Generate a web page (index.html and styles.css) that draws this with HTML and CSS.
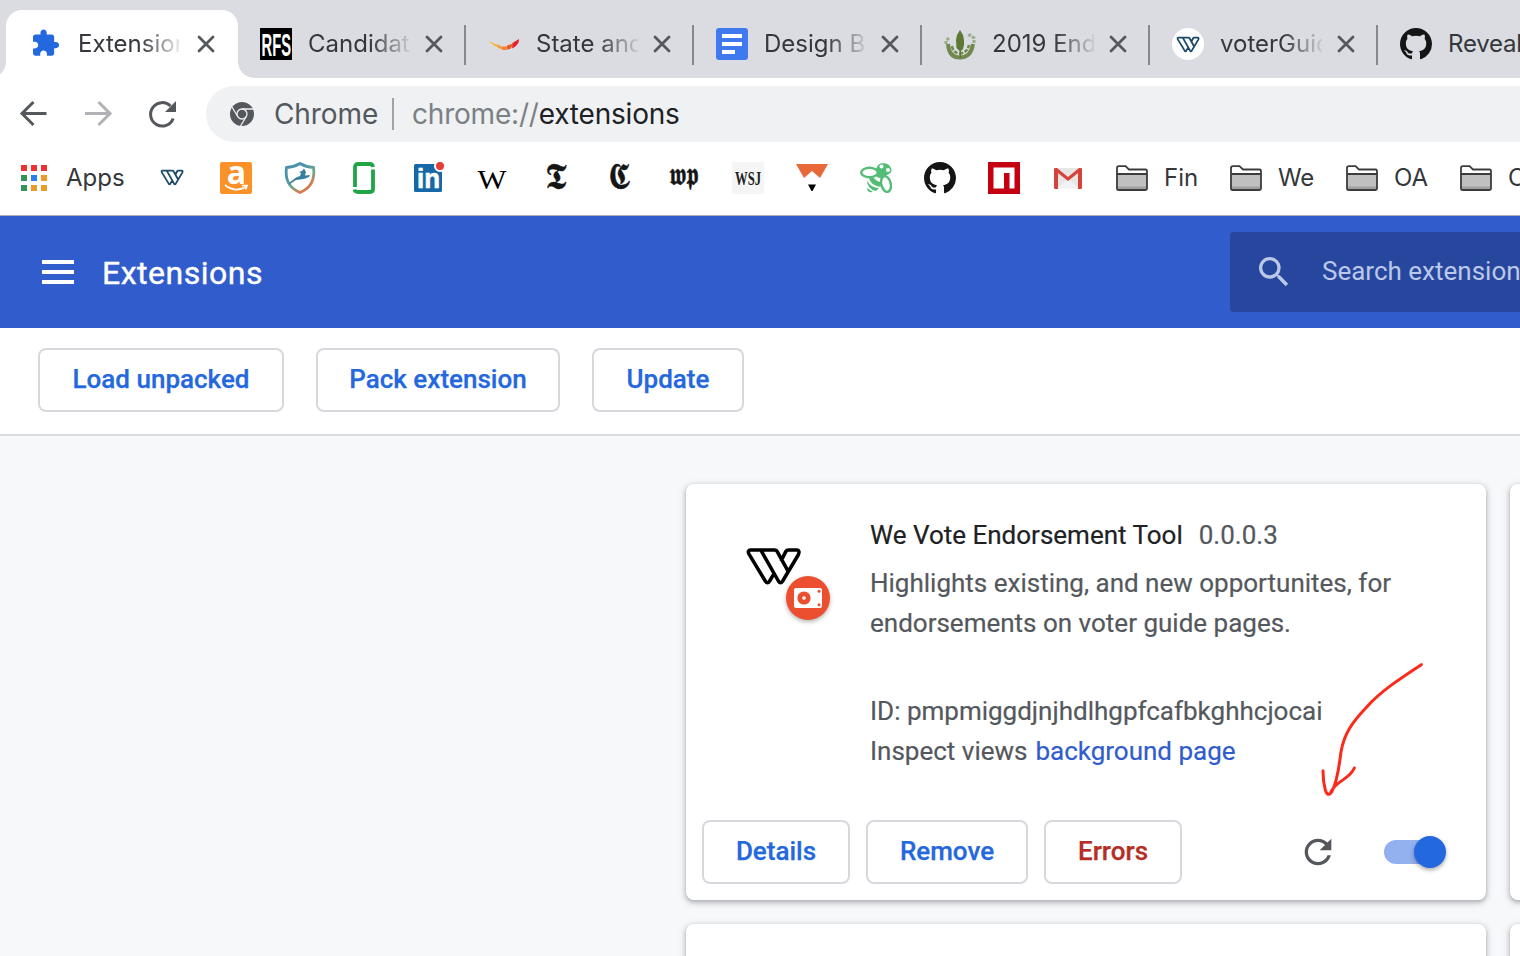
FILE: index.html
```html
<!DOCTYPE html>
<html lang="en">
<head>
<meta charset="utf-8">
<title>Extensions</title>
<link rel="stylesheet" href="styles.css">
</head>
<body>
<svg class="defs" aria-hidden="true">
  <symbol id="close" viewBox="0 0 24 24"><path d="M5 5L19 19M19 5L5 19" fill="none" stroke="#54585d" stroke-width="2.8" stroke-linecap="round"/></symbol>
  <symbol id="wevote" viewBox="196 210 170 122"><path d="M208 234L257 315Q263 324 269 315L284 290M245 225L296 315Q302 324 308 315L355 236Q361 222 350 222H326Q320 222 318 226L303 255M208 234Q202 222 213 222H284Q290 222 293 228L324 284" fill="none" stroke="currentColor" stroke-linejoin="round"/></symbol>
  <symbol id="github" viewBox="0 0 16 16"><path fill="#151515" d="M8 0C3.58 0 0 3.58 0 8c0 3.54 2.29 6.53 5.47 7.59.4.07.55-.17.55-.38 0-.19-.01-.82-.01-1.49-2.01.37-2.53-.49-2.69-.94-.09-.23-.48-.94-.82-1.13-.28-.15-.68-.52-.01-.53.63-.01 1.08.58 1.23.82.72 1.21 1.87.87 2.33.66.07-.52.28-.87.51-1.07-1.78-.2-3.64-.89-3.64-3.95 0-.87.31-1.59.82-2.15-.08-.2-.36-1.02.08-2.12 0 0 .67-.21 2.2.82.64-.18 1.32-.27 2-.27.68 0 1.36.09 2 .27 1.53-1.04 2.2-.82 2.2-.82.44 1.1.16 1.92.08 2.12.51.56.82 1.27.82 2.15 0 3.07-1.87 3.75-3.65 3.95.29.25.54.73.54 1.48 0 1.07-.01 1.93-.01 2.2 0 .21.15.46.55.38A8.013 8.013 0 0016 8c0-4.42-3.58-8-8-8z"/></symbol>
  <symbol id="folder" viewBox="0 0 32 32"><path d="M1 6.500Q1 4.200 3 4.200H9.500L13 7.500H29.500Q31 7.500 31 9V26.500Q31 28 29.500 28H2.500Q1 28 1 26.500Z" fill="#fff"/><path d="M1 12H31V28H1Z" fill="#c0c0c0"/><path d="M1 24.500H31V28H1Z" fill="#a0a0a0"/><path d="M1 12H31M1 6Q1 4.200 3 4.200H9.500L13 7.500H29.500Q31 7.500 31 9V26.500Q31 28 29.500 28H2.500Q1 28 1 26.500Z" fill="none" stroke="#3c3c3c" stroke-width="1.800"/></symbol>
</svg>

<header class="tabs">
  <div class="tab tab-active">
    <svg class="icon" viewBox="0 0 32 32"><path transform="translate(.5 .3) scale(1.245)" fill="#2468e0" d="M20.5 11H19V7c0-1.1-.9-2-2-2h-4V3.500C13 2.120 11.880 1 10.500 1S8 2.120 8 3.500V5H4c-1.100 0-1.990.9-1.990 2v3.800H3.500c1.490 0 2.700 1.210 2.700 2.700s-1.210 2.700-2.700 2.700H2V20c0 1.100.9 2 2 2h3.800v-1.500c0-1.490 1.210-2.700 2.700-2.700 1.490 0 2.700 1.210 2.700 2.700V22H17c1.100 0 2-.9 2-2v-4h1.500c1.380 0 2.500-1.120 2.500-2.500S21.880 11 20.500 11z"/></svg>
    <span class="tab-title">Extensions</span><svg class="close"><use href="#close"/></svg>
  </div>
  <div class="tab">
    <svg class="icon" viewBox="0 0 32 32"><path d="M0 0H32V32H0Z"/><text class="rfs" x="1.500" y="27.500" textLength="29.500" lengthAdjust="spacingAndGlyphs">RFS</text></svg>
    <span class="tab-title">Candidate</span><svg class="close"><use href="#close"/></svg>
  </div>
  <div class="tab">
    <svg class="icon" viewBox="0 0 32 32"><path d="M1 13L8 16.500 8 18.500Q4 17 1 13Z" fill="#fbb829"/><path d="M7 16L13 18 14 21.500Q9 20 7 16Z" fill="#f8a02c"/><path d="M13 18.500H19L18 22H14.500Z" fill="#f58232"/><path d="M19 17.500L25 15.500 23 20.500 18.500 22Z" fill="#ee5a2a"/><path d="M24.500 15L31 11Q31.500 17 24 20.500Z" fill="#e8222a"/></svg>
    <span class="tab-title">State and</span><svg class="close"><use href="#close"/></svg>
  </div>
  <div class="tab">
    <svg class="icon" viewBox="0 0 32 32"><rect width="32" height="32" rx="3" fill="#4079ed"/><path d="M6 6H26V10H6ZM6 14H26V18H6ZM6 22H19V26H6Z" fill="#fff"/></svg>
    <span class="tab-title">Design B</span><svg class="close"><use href="#close"/></svg>
  </div>
  <div class="tab">
    <svg class="icon" viewBox="0 0 32 32"><g fill="none" stroke="#71894f"><path d="M4 16Q5 29.500 16 29.500Q27 29.500 29 16" stroke-width="4"/><path d="M8 18Q9 25 16 25.500Q23 25 25 17" stroke-width="2.500" stroke-dasharray="4 1.500"/><path d="M2 16V12L6 10M30 15V10L26 7L23 9" stroke-width="3" stroke-dasharray="3 1.500" opacity=".6"/></g><path d="M16 2L19 7 20 12 20 17 19 21 17 23V30H15.500V23L12.500 20 12 12 13 7Z" fill="#5d7a35"/></svg>
    <span class="tab-title">2019 End</span><svg class="close"><use href="#close"/></svg>
  </div>
  <div class="tab">
    <span class="icon disc"><svg class="we-small"><use href="#wevote"/></svg></span>
    <span class="tab-title">voterGuid</span><svg class="close"><use href="#close"/></svg>
  </div>
  <div class="tab tab-last">
    <svg class="icon"><use href="#github"/></svg>
    <span class="tab-title">Reveal</span>
  </div>
</header>

<nav class="toolbar">
  <svg class="nav" viewBox="0 0 32 32"><path d="M28.500 15.500H4.500M15.500 4L4 15.500L15.500 27" fill="none" stroke="#54585d" stroke-width="3"/></svg>
  <svg class="nav" viewBox="0 0 32 32"><path d="M3 15.500H27.500M16.500 4L28 15.500L16.500 27" fill="none" stroke="#b0b2b5" stroke-width="3"/></svg>
  <svg class="nav" viewBox="0 0 32 32"><path d="M27.200 20.500A11.700 11.700 0 1 1 24.500 8" fill="none" stroke="#54585d" stroke-width="3"/><path d="M30 3V14H19Z" fill="#54585d"/></svg>
  <div class="omnibox">
    <svg class="chrome" viewBox="0 0 24 24"><circle cx="12" cy="12" r="12" fill="#54585d"/><g fill="none" stroke="#eff1f3" stroke-width="1.300"><circle cx="12" cy="12" r="5"/><path d="M12 7H23M7.700 14.500L2 5M16.300 14.500L10.500 24"/></g></svg>
    <span class="site">Chrome</span><span class="rule"></span><span class="url">chrome://<b>extensions</b></span>
  </div>
</nav>

<nav class="bookmarks">
  <svg class="apps" viewBox="0 0 26 26"><path fill="#ef3030" d="M0 0H6V6H0ZM10 0H16V6H10ZM20 0H26V6H20Z"/><path fill="#33935a" d="M0 10H6V16H0ZM0 20H6V26H0Z"/><path fill="#2a80ee" d="M10 10H16V16H10Z"/><path fill="#eb9b27" d="M20 10H26V16H20ZM10 20H16V26H10ZM20 20H26V26H20Z"/></svg>
  <span class="apps-label">Apps</span>
  <span class="icon"><svg class="we-small"><use href="#wevote"/></svg></span>
  <svg class="icon" viewBox="0 0 32 32"><rect width="32" height="32" rx="2" fill="#fb9129"/><text class="amz" x="16.500" y="22" text-anchor="middle">a</text><path d="M5 23Q15 31 25.500 25M22 23.500H27L25.500 27.500" fill="none" stroke="#fff" stroke-width="1.700"/></svg>
  <svg class="icon" viewBox="0 0 32 32"><defs><linearGradient id="shield" x2=".7" y2="1"><stop offset=".35" stop-color="#4b91ae"/><stop offset=".65" stop-color="#69aa86"/><stop offset=".88" stop-color="#d77b4d"/></linearGradient></defs><path d="M16 1.500Q22 5 29.500 5.500Q32 24 16 30.500Q0 24 2.500 5.500Q10 5 16 1.500Z" fill="none" stroke="url(#shield)" stroke-width="2.800"/><path d="M5 21L12 15.500 16 14 17 11 15 10 18 9 20 6.500 22 10 21 13.500 26 13 25 15 20 17 12 18 6 22Z" fill="#377d9c"/></svg>
  <svg class="icon" viewBox="0 0 32 32"><path d="M7 25V5Q7 2 10 2H22Q24.500 2 25 5M25 7.500V27Q25 30 22 30H10Q7 30 6.500 27.500" fill="none" stroke="#20a446" stroke-width="3.800"/></svg>
  <svg class="icon" viewBox="0 0 32 32"><rect x="2" y="2" width="28" height="28" rx="1.500" fill="#1768a6"/><circle cx="28" cy="4" r="6" fill="#fff"/><text class="li" x="5" y="26" textLength="23" lengthAdjust="spacingAndGlyphs">in</text><circle cx="28" cy="4" r="4" fill="#e43d3c"/></svg>
  <svg class="icon" viewBox="0 0 32 32"><text class="wiki" x="16" y="26.500" text-anchor="middle" textLength="29" lengthAdjust="spacingAndGlyphs">W</text></svg>
  <svg class="icon" viewBox="0 0 32 32"><text class="fraktur" x="5" y="27" textLength="22" lengthAdjust="spacingAndGlyphs">𝕿</text></svg>
  <svg class="icon" viewBox="0 0 32 32"><text class="fraktur" x="4" y="27" textLength="23" lengthAdjust="spacingAndGlyphs">𝕮</text></svg>
  <svg class="icon" viewBox="0 0 32 32"><text class="fraktur wp" x="1" y="23" textLength="30" lengthAdjust="spacingAndGlyphs">𝖜𝖕</text></svg>
  <svg class="icon" viewBox="0 0 32 32"><path d="M0 0H32V32H0Z" fill="#f5f5f5"/><text class="wsj" x="3" y="23" textLength="26" lengthAdjust="spacingAndGlyphs">WSJ</text></svg>
  <svg class="icon" viewBox="0 0 32 32"><path d="M0 2H32L24 16 16 9 8 16Z" fill="#e8683a"/><path d="M12 22.500H20L16.500 29H15.500Z"/></svg>
  <svg class="icon" viewBox="0 0 32 32"><path d="M16 7Q18 1 23 1.300Q29 1 31 6Q33 11 27 13Q22 18 17 15Q14 12 16 7ZM9 15.500L13 15Q17 20 21 20L20.500 25Q10 23 9 15.500ZM7 18.500Q11 26 19 26L16 29Q7 27 7 18.500ZM7 26L13 30Q7 31 7 26Z" fill="#55bc78"/><g fill="#fff" stroke="#55bc78" stroke-width="2.400"><ellipse cx="9.500" cy="10.500" rx="8.300" ry="4.700"/><ellipse cx="26" cy="22" rx="4.700" ry="8" transform="rotate(-14 26 22)"/></g><circle cx="21.500" cy="4.500" r="2" fill="#fff"/><circle cx="28" cy="8" r="2" fill="#fff"/></svg>
  <svg class="icon"><use href="#github"/></svg>
  <svg class="icon" viewBox="0 0 32 32"><path d="M0 0H32V32H0Z" fill="#c40010"/><path d="M5.500 5.500H26.500V26.500H21.500V11H16V26.500H5.500Z" fill="#fff"/></svg>
  <svg class="icon" viewBox="0 0 32 32"><path d="M2 6H30V27H2Z" fill="#e6e6e6"/><path d="M4 27L16 17L28 27Z" fill="#f3f3f3"/><path d="M2 7V25.500Q2 27 3.500 27H6V11L16 19 26 11V27H28.500Q30 27 30 25.500V7Q30 6 28.500 6H27L16 15 5 6H3.500Q2 6 2 7Z" fill="#d54338"/></svg>
  <svg class="icon"><use href="#folder"/></svg><span class="label">Fin</span>
  <svg class="icon"><use href="#folder"/></svg><span class="label label-we">We</span>
  <svg class="icon"><use href="#folder"/></svg><span class="label">OA</span>
  <svg class="icon"><use href="#folder"/></svg><span class="label label-last">C</span>
</nav>

<section class="page-header">
  <span class="menu"></span>
  <h1>Extensions</h1>
  <div class="search">
    <svg viewBox="0 0 24 24"><path fill="#bcc8e8" d="M15.500 14h-.79l-.28-.27A6.471 6.471 0 0 0 16 9.500 6.500 6.500 0 1 0 9.500 16c1.610 0 3.090-.59 4.230-1.570l.27.28v.79l5 4.990L20.490 19l-4.990-5zm-6 0C7.010 14 5 11.990 5 9.500S7.010 5 9.500 5 14 7.010 14 9.500 11.990 14 9.500 14z"/></svg>
    <span>Search extensions</span>
  </div>
</section>

<section class="actions">
  <button class="btn load">Load unpacked</button>
  <button class="btn pack">Pack extension</button>
  <button class="btn update">Update</button>
</section>

<main class="cards">
  <article class="card">
    <div class="card-main">
      <div class="logo">
        <svg class="we-large"><use href="#wevote"/></svg>
        <span class="badge"><svg viewBox="0 0 28 20"><rect width="28" height="20" rx="2" fill="#fff"/><circle cx="10" cy="10" r="6.600" fill="#ec4f30"/><circle cx="10" cy="10" r="1.800" fill="#fff"/><circle cx="25" cy="3.200" r="1.500" fill="#ec4f30"/><circle cx="25" cy="16.800" r="1.500" fill="#ec4f30"/></svg></span>
      </div>
      <div class="info">
        <p class="name"><span class="title">We Vote Endorsement Tool</span><span class="version">0.0.0.3</span></p>
        <p class="desc">Highlights existing, and new opportunites, for<br>endorsements on voter guide pages.</p>
        <p class="ident">ID: pmpmiggdjnjhdlhgpfcafbkghhcjocai</p>
        <p class="views">Inspect views <a>background page</a></p>
      </div>
    </div>
    <div class="card-actions">
      <button class="btn details">Details</button>
      <button class="btn remove">Remove</button>
      <button class="btn errors">Errors</button>
      <svg class="reload" viewBox="0 0 24 24"><path fill="#54585d" d="M17.650 6.350C16.200 4.900 14.210 4 12 4c-4.420 0-7.990 3.580-7.990 8s3.570 8 7.990 8c3.730 0 6.840-2.550 7.730-6h-2.080c-.82 2.330-3.040 4-5.650 4-3.310 0-6-2.690-6-6s2.690-6 6-6c1.660 0 3.140.69 4.220 1.780L13 11h7V4l-2.350 2.350z"/></svg>
      <span class="toggle"><i></i></span>
    </div>
    <svg class="pointer" viewBox="290 60 330 420"><path d="M603 74C540 115 480 155 440 200C395 247 372 280 362 335C356 385 350 425 336 452C327 468 320 466 315 450C310 432 308 415 308 392M332 455C350 420 388 418 402 384" fill="none" stroke="#fb2a1b" stroke-width="9" stroke-linecap="round"/></svg>
  </article>
  <article class="card"></article>
  <article class="card"></article>
  <article class="card"></article>
</main>
</body>
</html>
```
FILE: styles.css
```css
* { box-sizing: border-box; }
html { overflow: hidden; }
body {
  margin: 0;
  width: 1520px;
  height: 956px;
  overflow: hidden;
  display: flex;
  flex-direction: column;
  background: #f7f8fa;
  font-family: Roboto, sans-serif;
}
p, h1 { margin: 0; }
svg { display: block; flex: none; }
.defs { position: absolute; width: 0; height: 0; }
.icon { width: 32px; height: 32px; flex: none; }

/* Tab strip */
.tabs {
  height: 78px;
  flex: none;
  display: flex;
  background: #dadce1;
  padding: 10px 0 0 6px;
  overflow: hidden;
  font: 24px Inter, sans-serif;
  color: #34373b;
}
.tab {
  position: relative;
  width: 228px;
  flex: none;
  display: flex;
  align-items: center;
  padding-left: 22px;
}
.tab:not(.tab-active)::after {
  content: "";
  position: absolute;
  right: 0;
  top: 15px;
  width: 2px;
  height: 40px;
  background: #85888c;
}
.tab-active {
  width: 232px;
  padding-left: 24px;
  background: #fff;
  border-radius: 16px 16px 0 0;
}
.tab-active::before, .tab-active::after {
  content: "";
  position: absolute;
  bottom: 0;
  width: 16px;
  height: 16px;
}
.tab-active::before { left: -16px; background: radial-gradient(circle at 0 0, transparent 15.5px, #fff 16px); }
.tab-active::after { right: -16px; background: radial-gradient(circle at 100% 0, transparent 15.5px, #fff 16px); }
.tab-title {
  width: 102px;
  margin: 0 0 2px 16px;
  overflow: hidden;
  white-space: nowrap;
  -webkit-mask-image: linear-gradient(90deg, #000 62px, transparent 106px);
  mask-image: linear-gradient(90deg, #000 62px, transparent 106px);
}
.tab-last { width: 142px; flex: none; overflow: hidden; }
.tab-last::after { display: none; }
.tab-last .tab-title { letter-spacing: -0.2px; -webkit-mask-image: none; mask-image: none; }
.close { width: 24px; height: 24px; margin-left: 12px; }
.tab-active .close { margin-left: 14px; }
.disc { display: flex; align-items: center; justify-content: center; background: #fff; border-radius: 50%; }
.we-small { width: 24px; height: 17px; margin: auto; color: #1b4a66; stroke-width: 13; }
.bookmarks span.icon { display: flex; }
.rfs { font: bold 31px "Liberation Sans", sans-serif; fill: #fff; }

/* Navigation */
.toolbar {
  height: 72px;
  flex: none;
  display: flex;
  align-items: center;
  gap: 32px;
  padding-left: 18px;
  background: #fff;
}
.nav { width: 32px; height: 32px; }
.omnibox {
  flex: 1;
  height: 56px;
  margin-left: -4px;
  padding-left: 24px;
  display: flex;
  align-items: center;
  background: #eff1f3;
  border-radius: 28px 0 0 28px;
  font: 28px Inter, sans-serif;
  color: #54585d;
}
.chrome { width: 24px; height: 24px; }
.site { width: 118px; margin-left: 20px; letter-spacing: -0.1px; }
.rule { width: 2px; height: 32px; background: #a0a3a7; }
.url { margin-left: 18px; color: #7b8085; letter-spacing: -0.2px; }
.url b { font-weight: 400; color: #202124; }

/* Bookmarks */
.bookmarks {
  height: 66px;
  flex: none;
  display: flex;
  align-items: center;
  gap: 32px;
  padding: 0 0 10px 21px;
  overflow: hidden;
  background: #fff;
  border-bottom: 1px solid #acb0ba;
  font: 24px Inter, sans-serif;
  color: #34373b;
}
.apps { width: 26px; height: 26px; }
.apps-label { width: 58px; flex: none; margin-left: -13px; }
.label { width: 34px; flex: none; margin-left: -16px; white-space: nowrap; }
.label-we { width: 36px; letter-spacing: -0.2px; }
.label-last { width: 12px; overflow: hidden; }
.amz { font: bold 32px "Open Sans", sans-serif; fill: #fff; }
.li { font: bold 28px "Liberation Sans", sans-serif; fill: #fff; stroke: #fff; stroke-width: 0.6px; }
.wiki { font: 28px "Liberation Serif", serif; }
.fraktur { font: 37px "DejaVu Sans", serif; fill: #151515; stroke: #151515; stroke-width: 0.5px; }
.wp { font-size: 31px; }
.wsj { font: bold 19px "Liberation Serif", serif; fill: #222; }

/* Page header */
.page-header {
  height: 112px;
  flex: none;
  display: flex;
  align-items: center;
  padding-left: 42px;
  background: #315ccc;
  color: #fff;
}
.menu {
  width: 32px;
  height: 24px;
  flex: none;
  border-top: 4px solid #fff;
  border-bottom: 4px solid #fff;
  background: linear-gradient(#fff, #fff) 0 6px / 100% 4px no-repeat;
}
h1 {
  width: 200px;
  flex: none;
  margin-left: 28px;
  padding-top: 2px;
  font-size: 32px;
  font-weight: 400;
  letter-spacing: 0.5px;
  -webkit-text-stroke: 0.4px #fff;
}
.search {
  width: 290px;
  height: 80px;
  flex: none;
  display: flex;
  align-items: center;
  margin-left: 928px;
  padding-left: 24px;
  overflow: hidden;
  border-radius: 4px 0 0 4px;
  background: #27479e;
  color: #bcc8e8;
  font-size: 26px;
}
.search svg { width: 40px; height: 40px; }
.search span { flex: none; margin-left: 28px; margin-top: -2px; white-space: nowrap; }

/* Actions */
.actions {
  height: 108px;
  flex: none;
  display: flex;
  padding: 20px 38px;
  background: #fff;
  border-bottom: 2px solid #dadce0;
}
.btn {
  height: 64px;
  padding: 0 0 2px;
  border: 2px solid #d7d8dd;
  border-radius: 8px;
  background: #fff;
  color: #2468e0;
  font: 500 26px Roboto, sans-serif;
  -webkit-text-stroke: 0.25px currentColor;
  white-space: nowrap;
}
.load { width: 246px; }
.pack { width: 244px; margin-left: 32px; }
.update { width: 152px; margin-left: 32px; }

/* Cards */
.cards {
  flex: 1;
  min-height: 0;
  overflow: hidden;
  display: grid;
  grid-template-columns: 800px 800px;
  grid-auto-rows: 416px;
  gap: 24px;
  padding: 48px 0 0 686px;
}
.card {
  position: relative;
  display: flex;
  flex-direction: column;
  background: #fff;
  border-radius: 8px;
  box-shadow: 0 2px 4px rgba(60, 64, 67, 0.3), 0 2px 6px 2px rgba(60, 64, 67, 0.15);
}
.card-main { display: flex; height: 336px; padding-top: 31px; }
.logo { position: relative; width: 184px; padding: 31px 0 0 60px; }
.we-large { width: 57px; height: 41px; margin-left: -1px; color: #000; stroke-width: 10.5; }
.badge {
  position: absolute;
  left: 100px;
  top: 61px;
  width: 44px;
  height: 44px;
  display: flex;
  align-items: center;
  justify-content: center;
  border-radius: 50%;
  background: #ec4f30;
  box-shadow: 0 2px 4px rgba(0, 0, 0, 0.3);
}
.badge svg { width: 28px; height: 20px; }
.info { font-size: 26px; line-height: 40px; color: #54585d; white-space: nowrap; -webkit-text-stroke: 0.2px currentColor; }
.title { color: #202124; }
.version { margin-left: 16px; }
.desc { margin-top: 8px; }
.ident { margin-top: 48px; }
.views a { margin-left: 1.5px; color: #315ccc; }
.card-actions { display: flex; align-items: center; height: 64px; padding-left: 16px; }
.details { width: 148px; }
.remove { width: 162px; margin-left: 16px; }
.errors { width: 138px; margin-left: 16px; color: #b52d25; }
.reload { width: 40px; height: 40px; margin-left: 116px; }
.toggle { width: 56px; height: 24px; margin-left: 46px; border-radius: 12px; background: #93b1ef; }
.toggle i {
  display: block;
  width: 32px;
  height: 32px;
  margin: -4px 0 0 30px;
  border-radius: 50%;
  background: #2468e0;
  box-shadow: 0 2px 4px rgba(0, 0, 0, 0.35);
}
.pointer { position: absolute; left: 631px; top: 176px; width: 110px; height: 140px; }
```
